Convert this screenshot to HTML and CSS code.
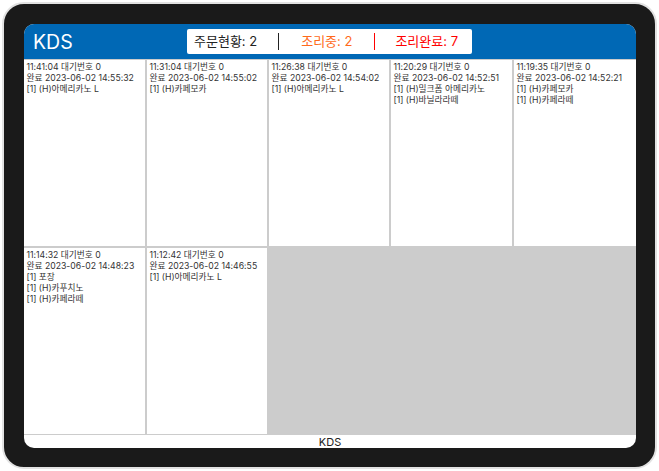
FILE: index.html
```html
<!DOCTYPE html>
<html lang="ko">
<head>
    <meta charset="UTF-8">
    <meta name="viewport" content="width=device-width, initial-scale=1.0">
    <title>KDS</title>
    <link rel="stylesheet" href="styles.css">
</head>
<body>
    <div class="device">
        <div class="screen">
            <div class="header">
                <div class="logo">KDS</div>
                <div class="status">
                    <span class="status-item waiting">주문현황: 2</span>
                    <span class="status-item cooking">조리중: 2</span>
                    <span class="status-item done">조리완료: 7</span>
                </div>
            </div>

            <div class="orders">
                <div class="order">
                    <div>11:41:04 대기번호 0</div>
                    <div>완료 2023-06-02 14:55:32</div>
                    <div>[1] (H)아메리카노 L</div>
                </div>
                <div class="order">
                    <div>11:31:04 대기번호 0</div>
                    <div>완료 2023-06-02 14:55:02</div>
                    <div>[1] (H)카페모카</div>
                </div>
                <div class="order">
                    <div>11:26:38 대기번호 0</div>
                    <div>완료 2023-06-02 14:54:02</div>
                    <div>[1] (H)아메리카노 L</div>
                </div>
                <div class="order">
                    <div>11:20:29 대기번호 0</div>
                    <div>완료 2023-06-02 14:52:51</div>
                    <div>[1] (H)밀크폼 아메리카노</div>
                    <div>[1] (H)바닐라라떼</div>
                </div>
                <div class="order">
                    <div>11:19:35 대기번호 0</div>
                    <div>완료 2023-06-02 14:52:21</div>
                    <div>[1] (H)카페모카</div>
                    <div>[1] (H)카페라떼</div>
                </div>
                <div class="order">
                    <div>11:14:32 대기번호 0</div>
                    <div>완료 2023-06-02 14:48:23</div>
                    <div>[1] 포장</div>
                    <div>[1] (H)카푸치노</div>
                    <div>[1] (H)카페라떼</div>
                </div>
                <div class="order">
                    <div>11:12:42 대기번호 0</div>
                    <div>완료 2023-06-02 14:46:55</div>
                    <div>[1] (H)아메리카노 L</div>
                </div>
            </div>

            <div class="footer">KDS</div>
        </div>
    </div>
</body>
</html>
```

FILE: styles.css
```css
* {
    box-sizing: border-box;
}
html, body {
    height: 100%;
}
body {
    font-family: Inter, "Noto Sans CJK KR", sans-serif;
    background-color: #fff;
    margin: 0;
    padding: 2px;
}
.device {
    height: 100%;
    background-color: #1a1a1a;
    border: 2px solid #e2e2e2;
    border-radius: 22px;
    padding: 20px 19px 19px 20px;
}
.screen {
    height: 100%;
    background-color: #fff;
    border-radius: 10px;
    overflow: hidden;
    display: flex;
    flex-direction: column;
}
.header {
    height: 35px;
    flex: none;
    background-color: #0068b5;
    display: flex;
    align-items: center;
}
.logo {
    color: #fff;
    font-size: 19.5px;
    margin-left: 9px;
    width: 154px;
}
.status {
    display: flex;
    align-items: center;
    width: 285px;
    height: 25px;
    padding-left: 7px;
    background-color: #fff;
    border-radius: 2px;
    font-size: 13px;
    color: #222;
}
.status-item {
    flex: none;
    height: 17px;
    line-height: 17px;
    border-right: 1px solid #222;
}
.waiting {
    padding-right: 21px;
    margin-right: 22px;
}
.cooking {
    color: #ff6a1a;
    border-right-color: #f00;
    padding-right: 22px;
    margin-right: 20px;
}
.done {
    color: #f00;
    border-right: none;
}
.orders {
    flex: 1;
    background-color: #ccc;
    display: grid;
    grid-template-columns: 121px 120px 120px 121px 1fr;
    grid-template-rows: repeat(2, 1fr);
    gap: 2px;
    padding: 1px 0;
}
.order {
    background-color: #fff;
    padding: 2px 2.5px;
    font-size: 8.7px;
    line-height: 11px;
    color: #333;
    white-space: nowrap;
}
.footer {
    height: 13.5px;
    flex: none;
    text-align: center;
    font-size: 11px;
    line-height: 15px;
    color: #222;
}
```
